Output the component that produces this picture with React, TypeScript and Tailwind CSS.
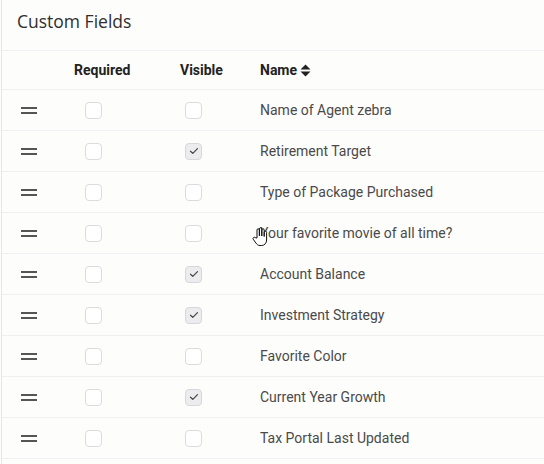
import React from "react";

type Field = { name: string; required: boolean; visible: boolean };

const fields: Field[] = [
  { name: "Name of Agent zebra", required: false, visible: false },
  { name: "Retirement Target", required: false, visible: true },
  { name: "Type of Package Purchased", required: false, visible: false },
  { name: "Your favorite movie of all time?", required: false, visible: false },
  { name: "Account Balance", required: false, visible: true },
  { name: "Investment Strategy", required: false, visible: true },
  { name: "Favorite Color", required: false, visible: false },
  { name: "Current Year Growth", required: false, visible: true },
  { name: "Tax Portal Last Updated", required: false, visible: false },
];

function Checkbox({ checked }: { checked: boolean }) {
  return (
    <div
      className={`flex h-[17px] w-[17px] items-center justify-center rounded-[4px] border ${
        checked ? "border-[#d8d8dc] bg-[#ececef]" : "border-[#dcdcdf] bg-white"
      }`}
    >
      {checked && (
        <svg width="10" height="8" viewBox="0 0 10 8" fill="none">
          <path d="M1.5 4.2 L3.8 6.4 L8.5 1.6" stroke="#444" strokeWidth="1.2" strokeLinecap="round" strokeLinejoin="round" />
        </svg>
      )}
    </div>
  );
}

function Handle() {
  return (
    <div className="flex w-4 flex-col gap-[3px]">
      <div className="h-[2px] w-4 bg-[#555]" />
      <div className="h-[2px] w-4 bg-[#555]" />
    </div>
  );
}

function SortIcon() {
  return (
    <svg width="11" height="13" viewBox="0 0 11 13" className="ml-[3px]">
      <path d="M5.5 0.5 L10.5 5.5 H0.5 Z" fill="#222" />
      <path d="M5.5 12.5 L10.5 7.5 H0.5 Z" fill="#222" />
    </svg>
  );
}

function HandCursor() {
  return (
    <svg width="17" height="20" viewBox="0 0 17 20" className="pointer-events-none absolute left-[252px] top-[227px]">
      <path
        d="M5 11 V3 a1.2 1.2 0 0 1 2.4 0 V9 V2 a1.2 1.2 0 0 1 2.4 0 V9 V3 a1.2 1.2 0 0 1 2.4 0 V9.5 V5.5 a1.2 1.2 0 0 1 2.4 0 V13 c0 3 -2 5.5 -5 5.5 H8 c-2 0 -3 -1 -4.2 -2.6 L1.2 12.2 a1.3 1.3 0 0 1 2 -1.6 Z"
        fill="#fff"
        stroke="#111"
        strokeWidth="1"
        strokeLinejoin="round"
      />
    </svg>
  );
}

export default function App() {
  return (
    <div className="relative min-h-[464px] w-[544px] bg-[#fdfdfc] font-['Roboto',sans-serif]">
      <div className="ml-px min-h-[464px] border-l border-[#e6e7e9]">
        <div className="flex h-[50px] items-center pl-[15px] pb-[8px]">
          <h1 className="font-['Open_Sans',sans-serif] text-[17.5px] text-[#2f2f2f]">Custom Fields</h1>
        </div>
        <div className="flex h-[40px] items-center border-y border-[#eef0f2] text-[14px] font-bold text-[#222]">
          <div className="w-[72px]" />
          <div className="w-[106px]">Required</div>
          <div className="w-[80px]">Visible</div>
          <div className="flex items-center">
            Name
            <SortIcon />
          </div>
        </div>
        {fields.map((f) => (
          <div key={f.name} className="flex h-[41px] items-center border-b border-[#eef0f2] text-[14px] text-[#4a4a4a]">
            <div className="flex w-[72px] pl-[19px]">
              <Handle />
            </div>
            <div className="w-[106px] pl-[11px]">
              <Checkbox checked={f.required} />
            </div>
            <div className="w-[80px] pl-[5px]">
              <Checkbox checked={f.visible} />
            </div>
            <div>{f.name}</div>
          </div>
        ))}
      </div>
      <HandCursor />
    </div>
  );
}
